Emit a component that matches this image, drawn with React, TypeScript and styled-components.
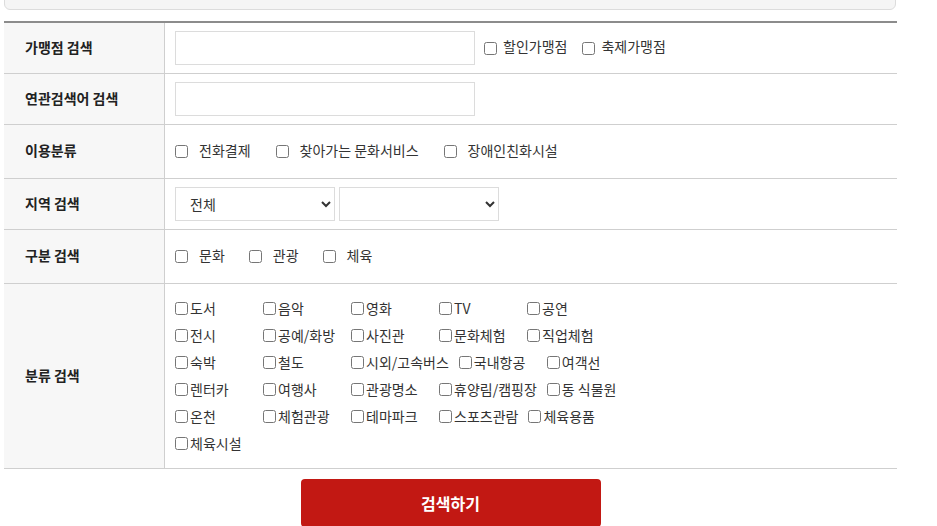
import React from "react";
import styled, { createGlobalStyle } from "styled-components";

const Global = createGlobalStyle`
  html, body { margin: 0; padding: 0; background: #fff; overflow: hidden; }
  body { font-family: "Noto Sans CJK KR", "Noto Sans", sans-serif; color: #333; }
  * { box-sizing: border-box; }
`;

const Page = styled.div`
  width: 893px;
  margin-left: 4px;
`;

const TopBox = styled.div`
  margin-top: -40px;
  height: 50px;
  width: 892px;
  background: #f5f5f5;
  border: 1px solid #dcdcdc;
  border-radius: 6px;
`;

const Form = styled.div`
  margin-top: 11px;
  border-top: 2px solid #8c8c8c;
`;

const Row = styled.div<{ $h: number }>`
  display: grid;
  grid-template-columns: 161px 1fr;
  min-height: ${(p) => p.$h + 1}px;
  border-bottom: 1px solid #cfcfcf;
`;

const Label = styled.div`
  display: flex;
  align-items: center;
  padding: 0 0 3px 21px;
  background: #f7f7f7;
  border-right: 1px solid #cfcfcf;
  font-size: 14px;
  font-weight: 700;
  color: #222;
`;

const Cell = styled.div`
  display: flex;
  align-items: center;
  padding: 0 10px;
`;

const Spacer = styled.span<{ $w: number }>`
  width: ${(p) => p.$w}px;
  flex: none;
`;

const TextInput = styled.input`
  width: 300px;
  height: 34px;
  border: 1px solid #dcdcdc;
  border-radius: 0;
  padding: 0 10px;
  font: inherit;
  outline: none;
`;

const Select = styled.select`
  width: 160px;
  height: 34px;
  border: 1px solid #dcdcdc;
  background: #fff;
  padding-left: 10px;
  font-family: inherit;
  font-size: 14px;
  color: #333;
  margin-right: 4px;
`;

const Check = styled.label<{ $box: number; $after: number }>`
  display: inline-flex;
  align-items: center;
  font-size: 14px;
  color: #333;
  margin-right: ${(p) => p.$after}px;
  white-space: nowrap;
  span { position: relative; top: -2px; }
  input {
    margin: 0 ${(p) => p.$box}px 0 0;
    width: 13px;
    height: 13px;
  }
`;

const Grid = styled.div`
  display: flex;
  flex-wrap: wrap;
  width: 470px;
  padding: 11px 0;
`;

const GridItem = styled.label`
  display: inline-flex;
  align-items: center;
  height: 27px;
  min-width: 78px;
  margin-right: 10px;
  font-size: 14px;
  color: #333;
  white-space: nowrap;
  span { position: relative; top: -1px; }
  input {
    margin: 0 2px 0 0;
    width: 13px;
    height: 13px;
  }
`;

const ButtonBar = styled.div`
  display: flex;
  justify-content: center;
  padding-top: 10px;
`;

const SearchButton = styled.button`
  width: 300px;
  height: 48px;
  border: none;
  border-radius: 4px;
  background: #c21813;
  color: #fff;
  font-family: inherit;
  font-size: 16px;
  font-weight: 700;
`;

const categories = [
  "도서", "음악", "영화", "TV", "공연",
  "전시", "공예/화방", "사진관", "문화체험", "직업체험",
  "숙박", "철도", "시외/고속버스", "국내항공", "여객선",
  "렌터카", "여행사", "관광명소", "휴양림/캠핑장", "동 식물원",
  "온천", "체험관광", "테마파크", "스포츠관람", "체육용품",
  "체육시설",
];

export default function App() {
  return (
    <>
      <Global />
      <Page>
        <TopBox />
        <Form>
          <Row $h={50}>
            <Label>가맹점 검색</Label>
            <Cell>
              <TextInput type="text" />
              <Spacer $w={9} />
              <Check $box={6} $after={15}>
                <input type="checkbox" />
                <span>할인가맹점</span>
              </Check>
              <Check $box={6} $after={0}>
                <input type="checkbox" />
                <span>축제가맹점</span>
              </Check>
            </Cell>
          </Row>
          <Row $h={50}>
            <Label>연관검색어 검색</Label>
            <Cell>
              <TextInput type="text" />
            </Cell>
          </Row>
          <Row $h={53}>
            <Label>이용분류</Label>
            <Cell>
              <Check $box={11} $after={25}>
                <input type="checkbox" />
                <span>전화결제</span>
              </Check>
              <Check $box={11} $after={25}>
                <input type="checkbox" />
                <span>찾아가는 문화서비스</span>
              </Check>
              <Check $box={11} $after={0}>
                <input type="checkbox" />
                <span>장애인친화시설</span>
              </Check>
            </Cell>
          </Row>
          <Row $h={50}>
            <Label>지역 검색</Label>
            <Cell>
              <Select defaultValue="전체">
                <option>전체</option>
              </Select>
              <Select defaultValue="">
                <option value=""></option>
              </Select>
            </Cell>
          </Row>
          <Row $h={53}>
            <Label>구분 검색</Label>
            <Cell>
              <Check $box={11} $after={24}>
                <input type="checkbox" />
                <span>문화</span>
              </Check>
              <Check $box={11} $after={24}>
                <input type="checkbox" />
                <span>관광</span>
              </Check>
              <Check $box={11} $after={0}>
                <input type="checkbox" />
                <span>체육</span>
              </Check>
            </Cell>
          </Row>
          <Row $h={184}>
            <Label>분류 검색</Label>
            <Cell>
              <Grid>
                {categories.map((c) => (
                  <GridItem key={c}>
                    <input type="checkbox" />
                    <span>{c}</span>
                  </GridItem>
                ))}
              </Grid>
            </Cell>
          </Row>
        </Form>
        <ButtonBar>
          <SearchButton type="button">검색하기</SearchButton>
        </ButtonBar>
      </Page>
    </>
  );
}
